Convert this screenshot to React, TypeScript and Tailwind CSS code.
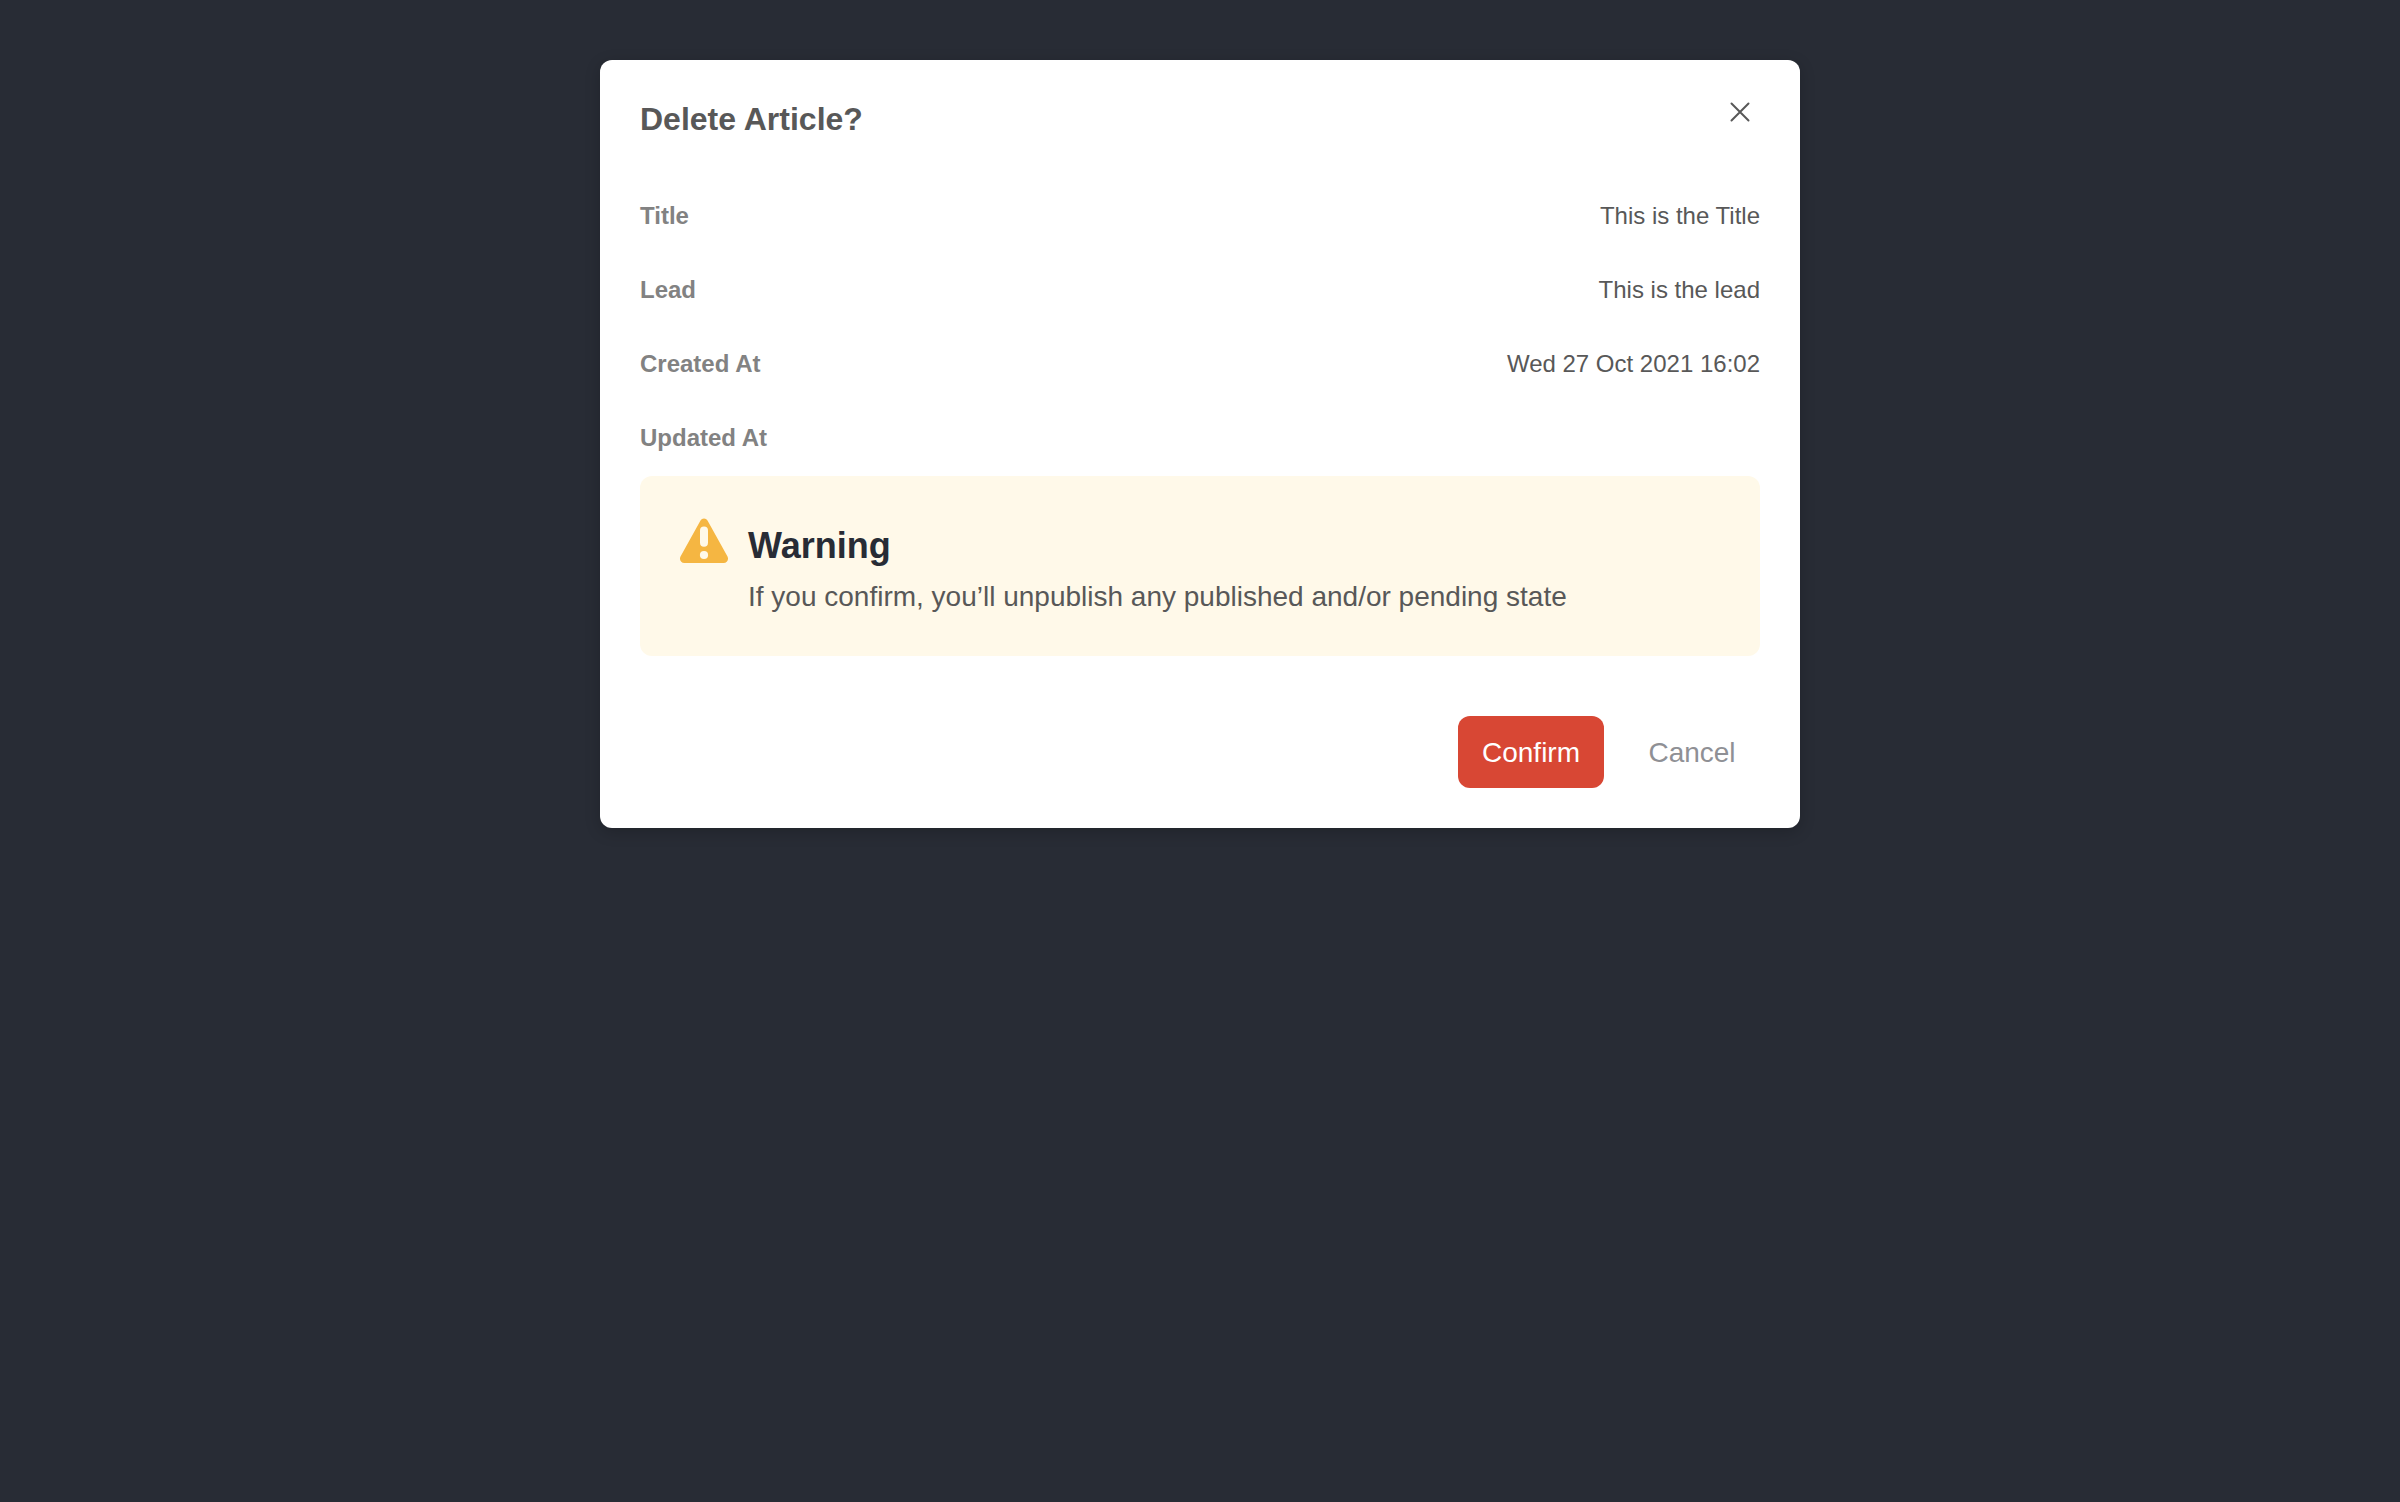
const rows = [
  { label: 'Title', value: 'This is the Title' },
  { label: 'Lead', value: 'This is the lead' },
  { label: 'Created At', value: 'Wed 27 Oct 2021 16:02' },
  { label: 'Updated At', value: '' },
];

function CloseIcon() {
  return (
    <svg className="size-10" viewBox="0 0 40 40" fill="none" stroke="currentColor" strokeWidth="2" strokeLinecap="round">
      <path d="M11.5 11.5 28.5 28.5M28.5 11.5 11.5 28.5" />
    </svg>
  );
}

function WarningIcon() {
  return (
    <svg className="mt-[2px] h-[45px] w-12 shrink-0" viewBox="0 0 48 45" fill="none">
      <path
        fill="#f5b642"
        d="M20.5 2.6C22-.1 26-.1 27.5 2.6L47.5 38.6C49 41.6 47 44.9 43.7 44.9H4.3C1 44.9-1 41.6.5 38.6Z"
      />
      <rect x="20" y="8.6" width="8" height="20.2" rx="4" fill="#fff9e9" />
      <circle cx="24" cy="37" r="4.1" fill="#fff9e9" />
    </svg>
  );
}

export default function App() {
  return (
    <div className="flex min-h-screen items-start justify-center bg-[#282c35] pt-[60px] font-['Liberation_Sans',Arial,sans-serif] text-[#585858]">
      <div role="dialog" className="flex h-[768px] w-[1200px] flex-col rounded-xl bg-white p-10 shadow-[0_4px_16px_rgba(0,0,0,0.2)]">
        <header className="flex h-20 items-start justify-between">
          <h1 className="text-[32px] leading-[38px] font-bold">Delete Article?</h1>
          <button aria-label="Close" className="mt-[-8.5px]">
            <CloseIcon />
          </button>
        </header>

        <dl>
          {rows.map((row) => (
            <div key={row.label} className="flex h-[74px] items-center justify-between pb-0.5 text-2xl">
              <dt className="font-bold text-[#828282]">{row.label}</dt>
              <dd>{row.value}</dd>
            </div>
          ))}
        </dl>

        <section className="flex h-[180px] items-start gap-5 rounded-xl bg-[#fff9e9] p-10">
          <WarningIcon />
          <div className="pt-2">
            <h2 className="text-4xl leading-[44px] font-bold text-[#282c35]">Warning</h2>
            <p className="mt-2 text-[28px] leading-[42px]">If you confirm, you’ll unpublish any published and/or pending state</p>
          </div>
        </section>

        <footer className="mt-auto flex justify-end gap-5">
          <button className="h-[72px] w-[146px] rounded-xl bg-[#d84734] pt-0.5 text-[28px] text-white">Confirm</button>
          <button className="h-[72px] w-[136px] rounded-xl pt-0.5 text-[28px] text-[#8f9095]">Cancel</button>
        </footer>
      </div>
    </div>
  );
}
